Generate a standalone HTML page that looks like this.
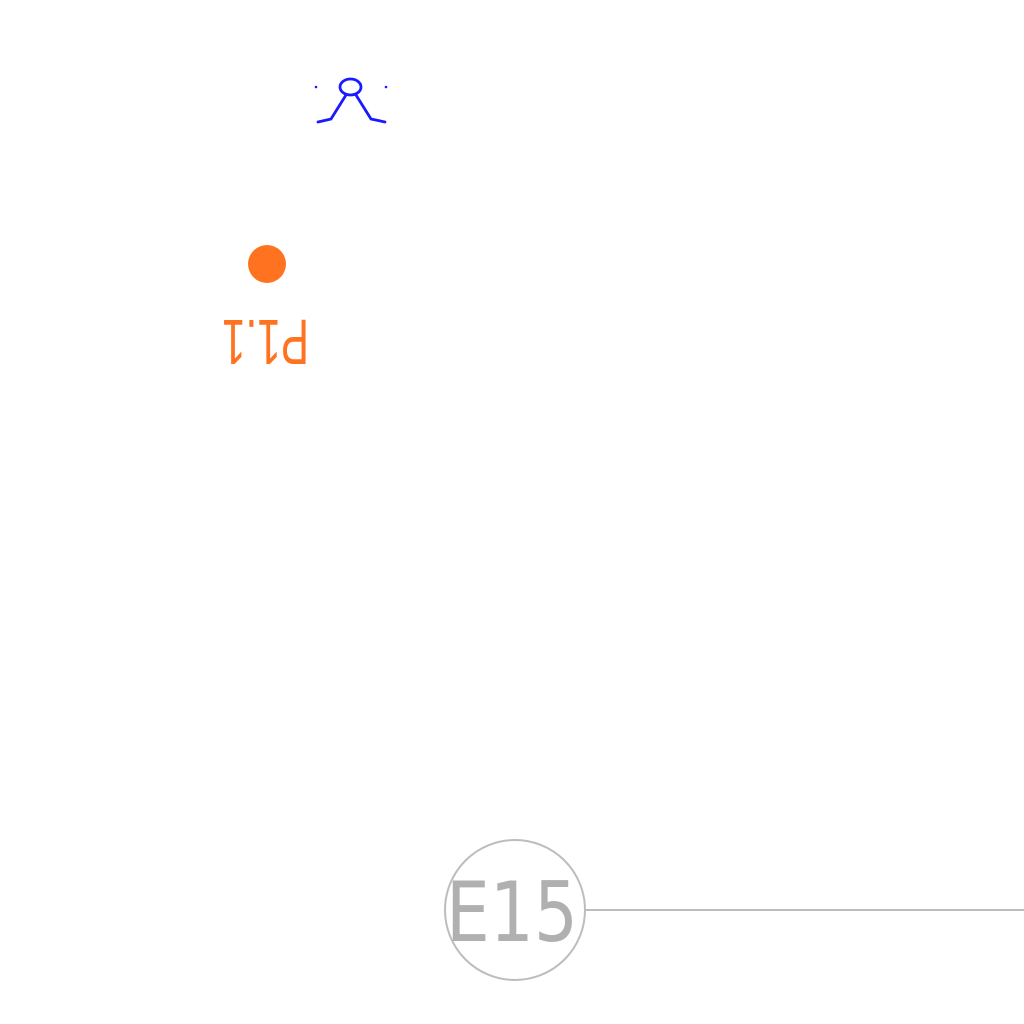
<!DOCTYPE html>
<html><head><meta charset="utf-8"><style>
html,body{margin:0;padding:0;background:#fff;width:1024px;height:1024px;overflow:hidden}
</style></head><body>
<svg width="1024" height="1024" viewBox="0 0 1024 1024" xmlns="http://www.w3.org/2000/svg">
<g stroke="#1a1aff" stroke-width="2.8" fill="none" stroke-linecap="round">
<ellipse cx="350.5" cy="87" rx="10.5" ry="8"/>
<path d="M346 95 L331 119 L318 122"/>
<path d="M356 95 L371 119 L385 122"/>
</g>
<circle cx="316" cy="87" r="1.3" fill="#1a1aff"/>
<circle cx="386" cy="87" r="1.3" fill="#1a1aff"/>
<circle cx="267" cy="264" r="19" fill="#ff7320"/>
<text transform="translate(309,320) rotate(180)" x="0" y="0" font-family="Liberation Sans, sans-serif" font-size="64" fill="#ff7320" textLength="87" lengthAdjust="spacingAndGlyphs">P1.1</text>
<line x1="585" y1="910" x2="1024" y2="910" stroke="#bdbdbd" stroke-width="2"/>
<circle cx="515" cy="910" r="70" fill="none" stroke="#bdbdbd" stroke-width="2"/>
<text x="446" y="941" font-family="DejaVu Sans, sans-serif" font-size="83" fill="#b0b0b0" textLength="132" lengthAdjust="spacingAndGlyphs">E15</text>
</svg>
</body></html>
